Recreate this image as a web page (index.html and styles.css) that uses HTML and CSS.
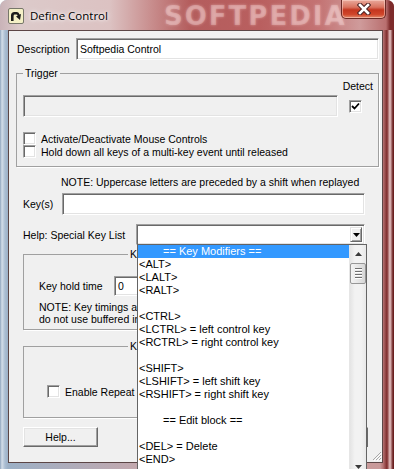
FILE: index.html
```html
<!DOCTYPE html>
<html lang="en">
<head>
    <meta charset="UTF-8">
    <meta name="viewport" content="width=device-width, initial-scale=1.0">
    <title>Define Control</title>
    <link rel="stylesheet" href="styles.css">
</head>
<body>
    <div class="window">
        <div class="titlebar">
            <svg class="app-icon" width="16" height="16" viewBox="0 0 16 16">
                <rect x="0.5" y="0.5" width="15" height="15" rx="1.5" fill="#f4f0c6" stroke="#77776a"/>
                <path d="M3 13 L3 7.5 Q3 4 6.5 4 L9 4 Q11 4 11.5 6.5 L13 6 L12 12 L8 8.5 L9.6 7.7 Q9.3 6.6 8.5 6.6 L6.8 6.6 Q5.6 6.6 5.6 8 L5.6 13 Z" fill="#1c1c1c"/>
            </svg>
            <span class="title">Define Control</span>
            <span class="watermark">SOFTPEDIA</span>
            <div class="close">
                <svg width="14" height="12" viewBox="0 0 14 12">
                    <path d="M3 2 L11 10 M11 2 L3 10" stroke="#4e2424" stroke-width="4.6" stroke-linecap="square"/>
                    <path d="M3 2 L11 10 M11 2 L3 10" stroke="#ffffff" stroke-width="2.6" stroke-linecap="square"/>
                </svg>
            </div>
        </div>

        <div class="client">
            <div class="row desc">
                <span class="desc-label">Description</span>
                <div class="field">Softpedia Control</div>
            </div>

            <fieldset class="group trigger">
                <legend>Trigger</legend>
                <div class="detect-label">Detect</div>
                <div class="trigger-row">
                    <div class="field disabled"></div>
                    <span class="check checked">
                        <svg width="9" height="9" viewBox="0 0 9 9"><path d="M1 4 L3.5 6.5 L8 1.5" fill="none" stroke="#000" stroke-width="1.8"/></svg>
                    </span>
                </div>
                <label class="opt first"><span class="check"></span>Activate/Deactivate Mouse Controls</label>
                <label class="opt"><span class="check"></span>Hold down all keys of a multi-key event until released</label>
            </fieldset>

            <div class="note">NOTE: Uppercase letters are preceded by a shift when replayed</div>

            <div class="row keys">
                <span class="keys-label">Key(s)</span>
                <div class="field"></div>
            </div>

            <div class="row helprow">
                <span class="help-label">Help: Special Key List</span>
                <div class="combo">
                    <div class="combo-btn">
                        <svg width="7" height="4" viewBox="0 0 7 4"><polygon points="0,0 7,0 3.5,4" fill="#000"/></svg>
                    </div>
                </div>
            </div>

            <fieldset class="group timing">
                <legend>Key Timing</legend>
                <div class="hold-row">
                    <span class="hold-label">Key hold time</span>
                    <div class="field small">0</div>
                </div>
                <div class="timing-note">NOTE: Key timings are<br>do not use buffered input</div>
            </fieldset>

            <fieldset class="group repeat">
                <legend>Key Repeat</legend>
                <label class="opt repeat-opt"><span class="check"></span>Enable Repeat</label>
            </fieldset>

            <div class="buttons">
                <button class="btn help-btn">Help...</button>
                <button class="btn">OK</button>
                <button class="btn">Cancel</button>
            </div>

            <div class="grip">
                <svg width="11" height="11" viewBox="0 0 11 11">
                    <path d="M10 2 L2 10 M10 5 L5 10 M10 8 L8 10" stroke="#a8a8a8" stroke-width="1"/>
                    <path d="M11 3 L3 11 M11 6 L6 11 M11 9 L9 11" stroke="#ffffff" stroke-width="1"/>
                </svg>
            </div>
        </div>

        <div class="keylist">
            <div class="items">
                <div class="item sel indent">== Key Modifiers ==</div>
                <div class="item">&lt;ALT&gt;</div>
                <div class="item">&lt;LALT&gt;</div>
                <div class="item">&lt;RALT&gt;</div>
                <div class="item">&nbsp;</div>
                <div class="item">&lt;CTRL&gt;</div>
                <div class="item">&lt;LCTRL&gt; = left control key</div>
                <div class="item">&lt;RCTRL&gt; = right control key</div>
                <div class="item">&nbsp;</div>
                <div class="item">&lt;SHIFT&gt;</div>
                <div class="item">&lt;LSHIFT&gt; = left shift key</div>
                <div class="item">&lt;RSHIFT&gt; = right shift key</div>
                <div class="item">&nbsp;</div>
                <div class="item indent">== Edit block ==</div>
                <div class="item">&nbsp;</div>
                <div class="item">&lt;DEL&gt; = Delete</div>
                <div class="item">&lt;END&gt;</div>
            </div>
            <div class="vscroll">
                <div class="arrow">
                    <svg width="7" height="4" viewBox="0 0 7 4"><polygon points="0,4 7,4 3.5,0" fill="#3a3a3a"/></svg>
                </div>
                <div class="thumb"><span></span><span></span><span></span><span></span></div>
                <div class="track"></div>
                <div class="arrow">
                    <svg width="7" height="4" viewBox="0 0 7 4"><polygon points="0,0 7,0 3.5,4" fill="#3a3a3a"/></svg>
                </div>
            </div>
        </div>
    </div>
</body>
</html>
```

FILE: styles.css
```css
body {
    margin: 0;
    background: #fff;
}
.window {
    position: relative;
    width: 394px;
    height: 469px;
    overflow: hidden;
    display: flex;
    flex-direction: column;
    border-radius: 7px 7px 0 0;
    background: linear-gradient(to right, #8ea4bd 0, #d3dde8 2px, #aabdd2 5px, #9cb0c6 8px, #c9a7aa 40%, #c99a9a 380px, #b77474 383px, #7e2b2b 387px, #e9c7c7 390px, #6a1f1f 393px);
    font-family: "Liberation Sans", Arial, sans-serif;
    font-size: 10.5px;
    color: #000;
}
.titlebar {
    position: relative;
    height: 30px;
    flex: none;
    display: flex;
    align-items: center;
    padding-left: 8px;
    background: linear-gradient(to right, #c9b3b8 0, #dccaca 20px, #dcc2c2 110px, #c98f8f 150px, #b45d5d 190px, #b95f5f 260px, #c47474 320px, #cf9b9b 360px, #b96f6f 386px, #7e2b2b 390px);
}
.app-icon {
    flex: none;
    margin-top: 1px;
}
.title {
    margin-left: 6px;
    font-family: "Open Sans", sans-serif;
    font-size: 11.5px;
    text-shadow: 0 0 6px #fff, 0 0 3px #fff;
    position: relative;
    z-index: 1;
}
.watermark {
    position: absolute;
    left: 164px;
    top: 1px;
    font-family: "DejaVu Sans", sans-serif;
    font-weight: bold;
    font-size: 26px;
    letter-spacing: 2px;
    color: rgba(255, 228, 228, 0.3);
    text-shadow: 0 0 3px rgba(255, 230, 230, 0.4);
}
.close {
    position: absolute;
    right: 8px;
    top: 0;
    width: 45px;
    height: 19px;
    box-sizing: border-box;
    display: flex;
    align-items: center;
    justify-content: center;
    border: 1px solid #6b2a26;
    border-top: none;
    border-radius: 0 0 5px 5px;
    background: linear-gradient(to bottom, #e9a99b 0, #d9735f 40%, #c4361f 55%, #d0452a 80%, #e28a6c 100%);
    box-shadow: inset 0 0 0 1px rgba(255, 220, 210, 0.5);
}
.client {
    position: relative;
    flex: 1;
    margin: 0 11px 6px 8px;
    padding: 7px 3px 0 7px;
    background: #f0f0f0;
    border: 1px solid #5c4646;
}
.row {
    display: flex;
    align-items: center;
}
.field {
    box-sizing: border-box;
    height: 22px;
    background: #fff;
    border: 1px solid;
    border-color: #a0a0a0 #ffffff #ffffff #a0a0a0;
    box-shadow: inset 1px 1px #696969, inset -1px -1px #e3e3e3;
    padding: 0 3px;
    line-height: 20px;
}
.desc .desc-label {
    width: 59px;
    padding-left: 1px;
}
.desc .field {
    flex: 1;
}
.group {
    margin: 0;
    border: 1px solid #a0a0a0;
    box-shadow: 1px 1px 0 #fff;
    min-width: 0;
}
.group legend {
    padding: 0 2px;
    line-height: 13px;
}
.trigger {
    margin-top: 7px;
    padding: 0 5px 8px 6px;
}
.detect-label {
    text-align: right;
    line-height: 13px;
}
.trigger-row {
    display: flex;
    align-items: center;
    margin-top: 2px;
}
.field.disabled {
    width: 315px;
    background: #f0f0f0;
    margin-right: 11px;
}
.check {
    box-sizing: border-box;
    width: 13px;
    height: 13px;
    flex: none;
    display: flex;
    align-items: center;
    justify-content: center;
    background: #fff;
    border: 1px solid;
    border-color: #a0a0a0 #ffffff #ffffff #a0a0a0;
    box-shadow: inset 1px 1px #696969, inset -1px -1px #e3e3e3;
}
.opt {
    display: flex;
    align-items: center;
    gap: 5px;
    height: 13px;
}
.opt.first {
    margin-top: 15px;
}
.note {
    margin-top: 9px;
    padding-left: 45px;
    line-height: 13px;
}
.keys {
    margin: 4px 14px 0 7px;
}
.keys-label {
    width: 39px;
}
.keys .field {
    flex: 1;
}
.helprow {
    margin: 9px 14px 0 7px;
}
.help-label {
    width: 113px;
}
.combo {
    box-sizing: border-box;
    flex: 1;
    height: 21px;
    display: flex;
    justify-content: flex-end;
    align-items: center;
    padding: 0 2px;
    background: #fff;
    border: 1px solid;
    border-color: #a0a0a0 #ffffff #ffffff #a0a0a0;
    box-shadow: inset 1px 1px #696969, inset -1px -1px #e3e3e3;
}
.combo-btn {
    box-sizing: border-box;
    width: 12px;
    height: 15px;
    display: flex;
    align-items: center;
    justify-content: center;
    background: #f0f0f0;
    border: 1px solid;
    border-color: #e3e3e3 #696969 #696969 #e3e3e3;
    box-shadow: inset 1px 1px #fff, inset -1px -1px #a0a0a0;
}
.timing {
    margin: 3px 14px 0 7px;
    padding: 0 4px 4px 15px;
}
.timing legend {
    margin-left: 89px;
}
.hold-row {
    display: flex;
    align-items: center;
    margin-top: 15px;
}
.hold-label {
    width: 75px;
}
.field.small {
    width: 80px;
    height: 20px;
    line-height: 18px;
}
.timing-note {
    margin-top: 5px;
    line-height: 12px;
}
.repeat {
    margin: 10px 14px 0 7px;
    padding: 0 4px 19px 23px;
}
.repeat legend {
    margin-left: 81px;
}
.repeat-opt {
    margin-top: 32px;
}
.buttons {
    display: flex;
    gap: 6px;
    margin: 9px 11px 0 7px;
}
.btn {
    box-sizing: border-box;
    width: 75px;
    height: 20px;
    padding: 0;
    font: inherit;
    color: #000;
    background: #f0f0f0;
    border: 1px solid;
    border-color: #ffffff #696969 #696969 #ffffff;
    box-shadow: inset -1px -1px #a0a0a0, inset 1px 1px #e3e3e3;
}
.help-btn {
    margin-right: auto;
}
.grip {
    position: absolute;
    right: 0;
    bottom: 1px;
    width: 11px;
    height: 11px;
}
.keylist {
    position: absolute;
    left: 137px;
    top: 244px;
    width: 230px;
    height: 232px;
    box-sizing: border-box;
    display: flex;
    background: #fff;
    border: 1px solid #646464;
    font-size: 11px;
}
.items {
    flex: 1;
}
.item {
    height: 13px;
    line-height: 13px;
    padding-left: 1px;
    white-space: nowrap;
}
.item.indent {
    padding-left: 25px;
}
.item.sel {
    background: #3399ff;
    color: #fff;
}
.vscroll {
    width: 17px;
    display: flex;
    flex-direction: column;
    background: linear-gradient(to right, #e4e4e4, #f2f2f2 30%, #f2f2f2 70%, #e8e8e8);
    border-left: 1px solid #e6e6e6;
    box-sizing: border-box;
}
.arrow {
    height: 17px;
    flex: none;
    display: flex;
    align-items: center;
    justify-content: center;
}
.thumb {
    box-sizing: border-box;
    height: 21px;
    margin: 1px 0 0 0;
    display: flex;
    flex-direction: column;
    align-items: center;
    justify-content: center;
    gap: 1px;
    border: 1px solid #979797;
    border-radius: 2px;
    background: linear-gradient(to right, #f3f3f3, #e6e6e6 50%, #d6d6d6);
}
.thumb span {
    width: 7px;
    height: 1px;
    background: #6f6f6f;
    box-shadow: 0 1px #fff;
    margin-bottom: 1px;
}
.track {
    flex: 1;
}
```
